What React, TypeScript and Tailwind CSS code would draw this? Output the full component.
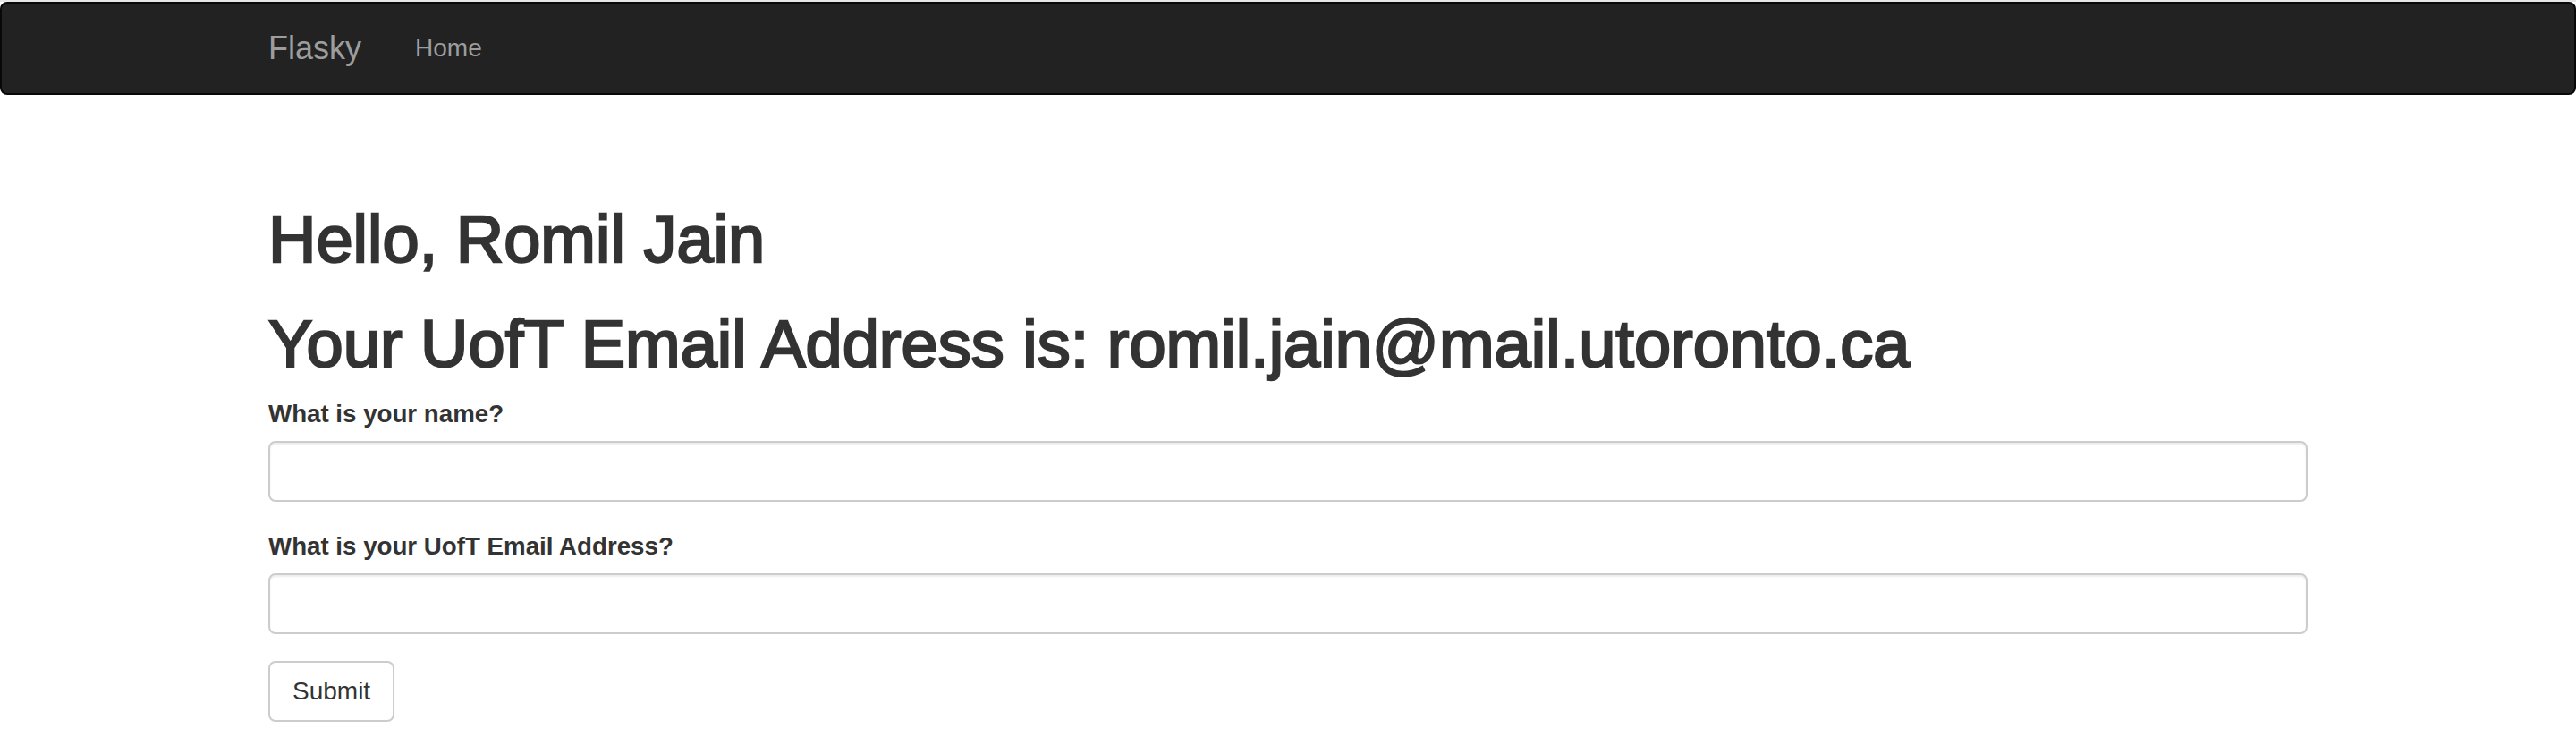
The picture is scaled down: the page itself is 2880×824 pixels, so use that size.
import React from "react";

export default function App() {
  return (
    <div
      className="min-h-[824px] bg-white text-[#333]"
      style={{ fontFamily: '"Liberation Sans", Arial, Helvetica, sans-serif' }}
    >
      <div className="h-[2px] bg-[#e6e6e6]" />
      <nav className="h-[104px] bg-[#222] border-2 border-[#080808] rounded-[8px]">
        <div className="w-[2340px] mx-auto px-[30px] flex">
          <a className="-ml-[30px] px-[30px] py-[30px] h-[100px] text-[36px] leading-[40px] text-[#9d9d9d]">
            Flasky
          </a>
          <ul className="flex">
            <li>
              <a className="block px-[30px] py-[30px] text-[28px] leading-[40px] text-[#9d9d9d]">
                Home
              </a>
            </li>
          </ul>
        </div>
      </nav>
      <div className="w-[2340px] mx-auto px-[30px]">
        <h1 className="mt-[122px] text-[74px] leading-[79.2px] font-normal [-webkit-text-stroke:2.4px_#333]">
          Hello, Romil Jain
        </h1>
        <h1 className="mt-[38px] text-[74px] leading-[79.2px] font-normal [-webkit-text-stroke:2.4px_#333]">
          Your UofT Email Address is: romil.jain@mail.utoronto.ca
        </h1>
        <form className="mt-[19px]">
          <div className="mb-[30px]">
            <label className="inline-block mb-[10px] text-[27.7px] leading-[40px] font-bold">
              What is your name?
            </label>
            <input
              type="text"
              className="block w-full h-[68px] px-[24px] border-2 border-[#ccc] rounded-[8px] bg-white shadow-[inset_0_2px_2px_rgba(0,0,0,0.075)] text-[28px]"
            />
          </div>
          <div className="mb-[30px]">
            <label className="inline-block mb-[10px] text-[27.7px] leading-[40px] font-bold">
              What is your UofT Email Address?
            </label>
            <input
              type="text"
              className="block w-full h-[68px] px-[24px] border-2 border-[#ccc] rounded-[8px] bg-white shadow-[inset_0_2px_2px_rgba(0,0,0,0.075)] text-[28px]"
            />
          </div>
          <button
            type="button"
            className="h-[68px] px-[25px] border-2 border-[#ccc] rounded-[8px] bg-white text-[28px] leading-[40px] text-[#333]"
          >
            Submit
          </button>
        </form>
      </div>
    </div>
  );
}
